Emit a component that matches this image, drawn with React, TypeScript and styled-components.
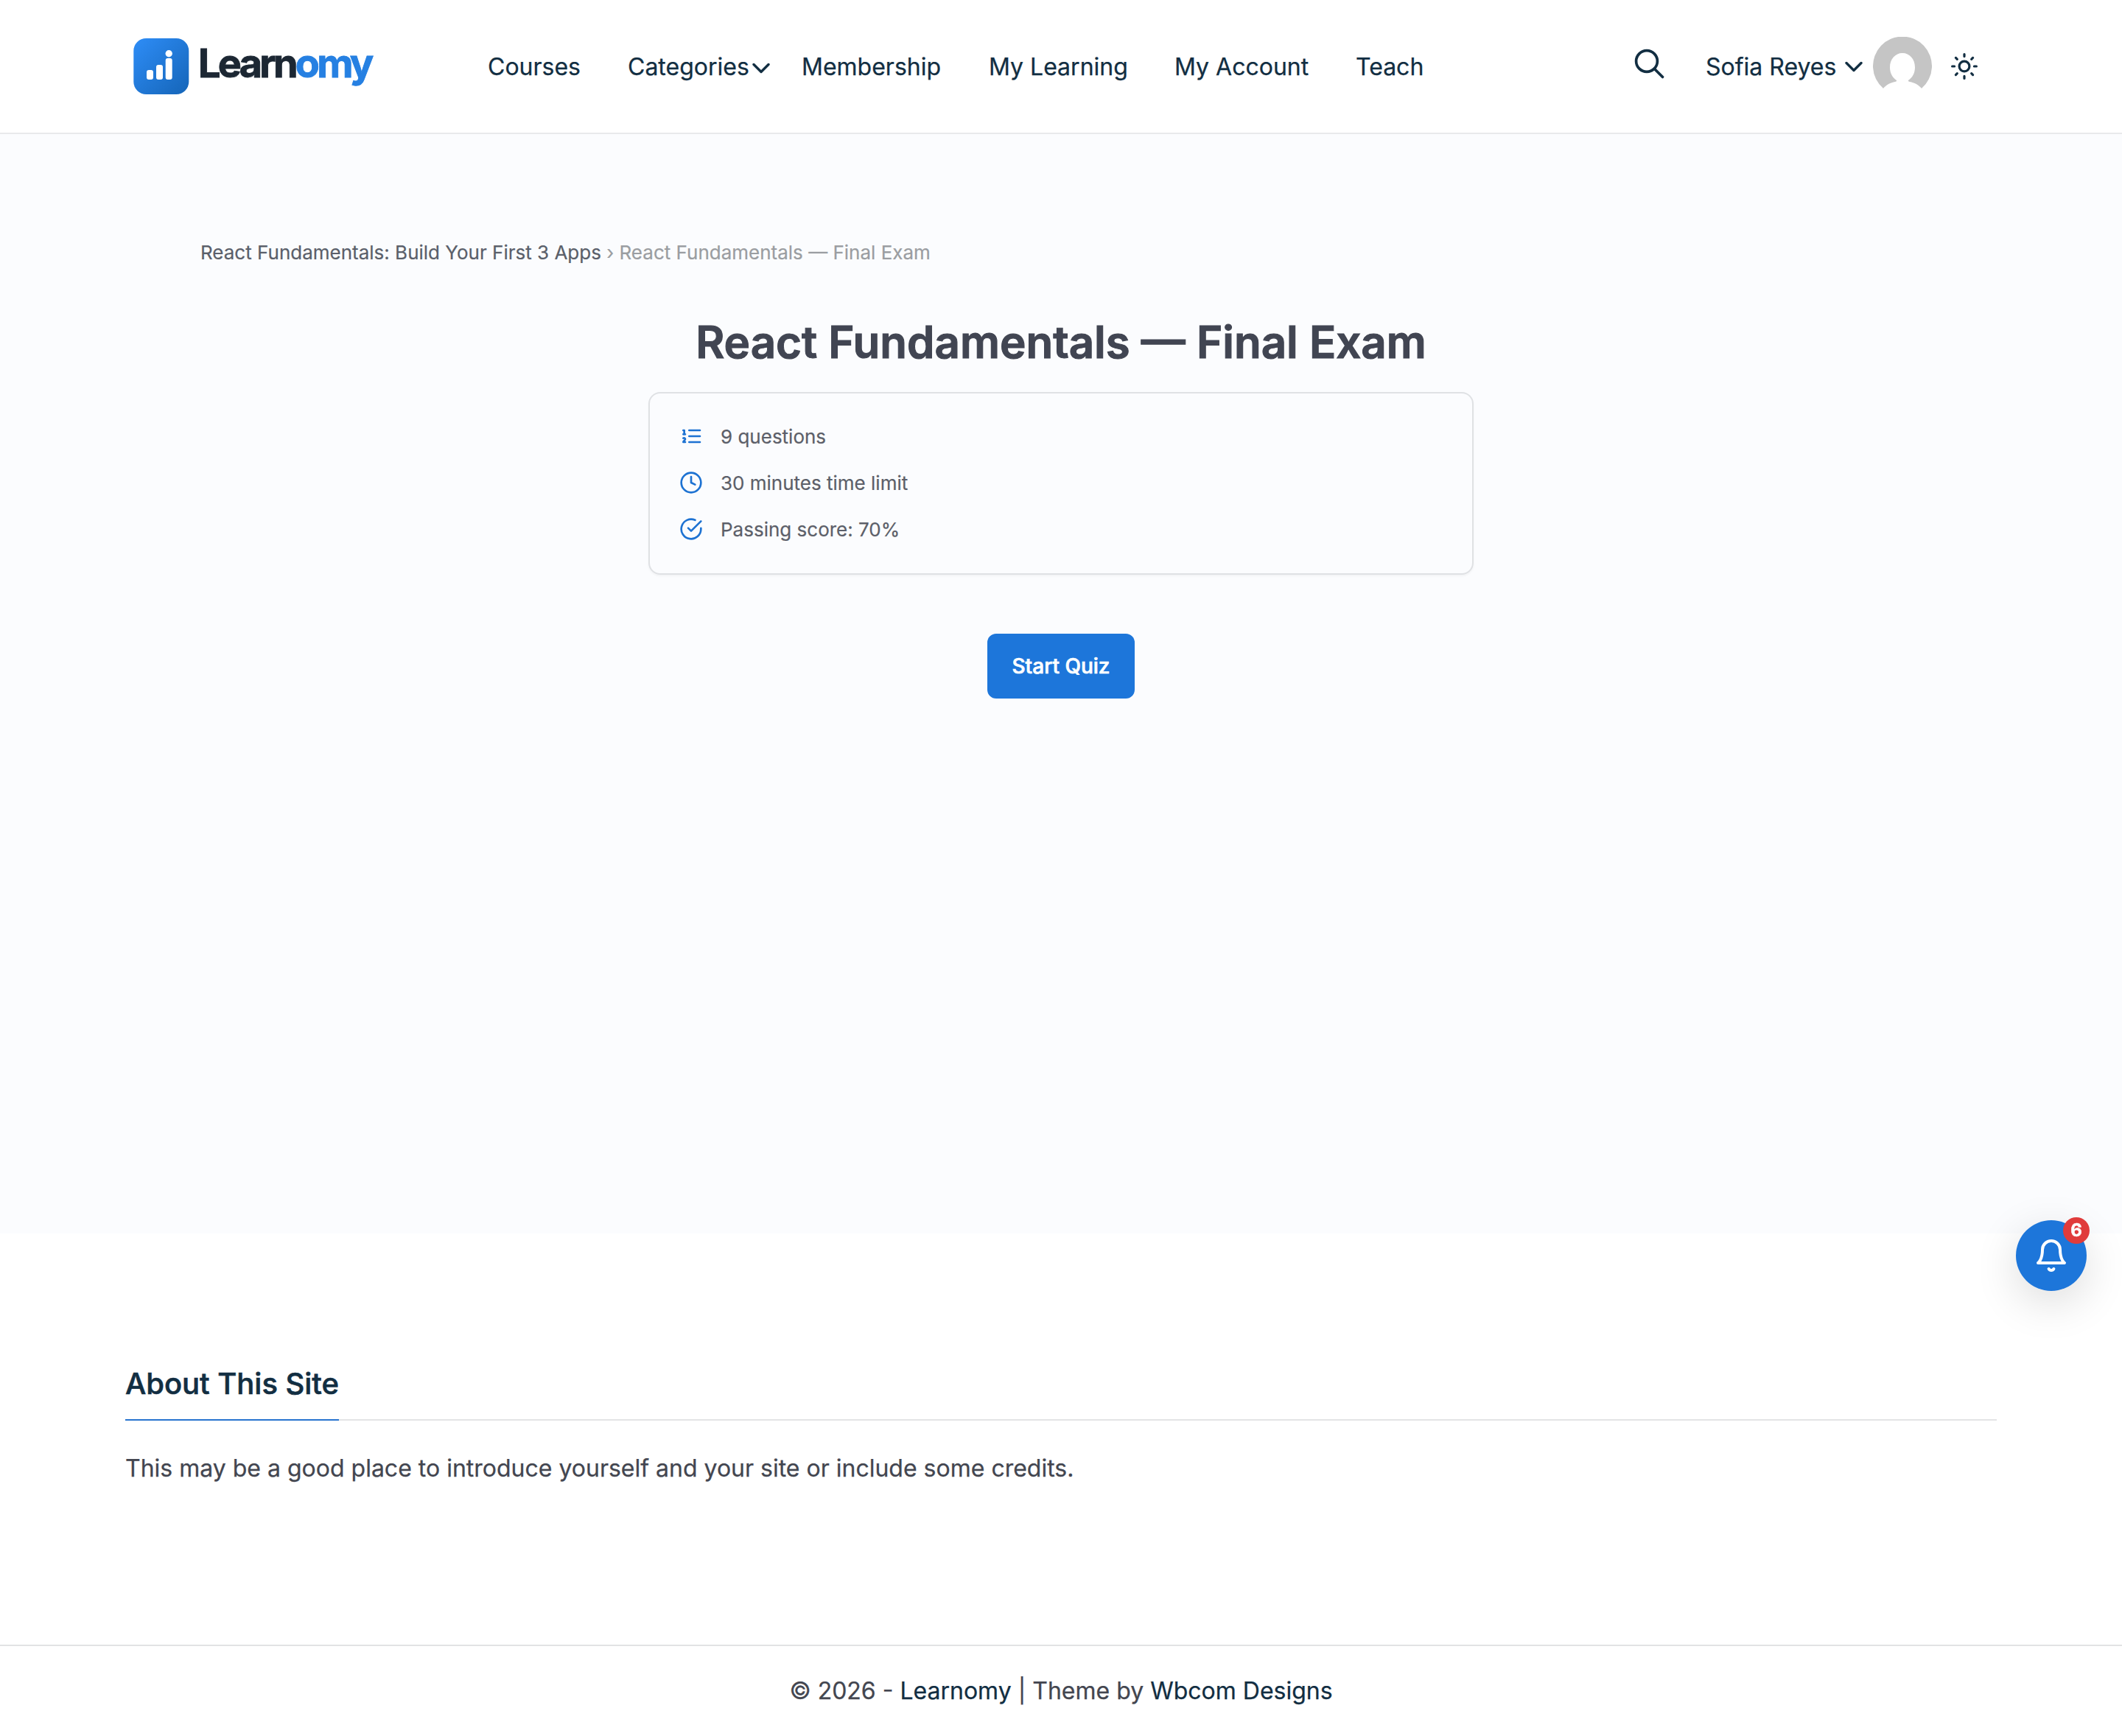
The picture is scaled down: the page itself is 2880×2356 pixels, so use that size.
import React from "react";
import styled, { createGlobalStyle } from "styled-components";

const Global = createGlobalStyle`
  *{box-sizing:border-box}
  body{margin:0;background:#fff;font-family:Inter,"Liberation Sans",sans-serif;color:#122e42;}
  h1,h2,p{margin:0}
`;

const Page = styled.div`
  height: 2356px;
  display: flex;
  flex-direction: column;
`;
const Header = styled.header`
  height: 182px;
  flex: none;
  border-bottom: 2px solid #e8e9eb;
  display: flex;
  align-items: center;
  padding: 0 196px 0 181px;
  font-size: 32px;
  line-height: 48px;
  -webkit-text-stroke: 0.25px currentColor;
`;
const Logo = styled.a`
  display: flex;
  align-items: center;
  width: 481px;
`;
const Wordmark = styled.span`
  font-size: 54px;
  font-weight: 700;
  letter-spacing: -3.75px;
  margin: -8px 0 0 12px;
  color: #1c2733;
  -webkit-text-stroke: 0.9px currentColor;
  b { color: #2680e2; font-weight: 700; -webkit-text-stroke: 0.9px #2680e2; }
`;
const Nav = styled.nav`
  display: flex;
  flex: 1;
  padding-top: 2px;
`;
const NavItem = styled.a<{ $w: number }>`
  display: flex;
  align-items: center;
  gap: 4px;
  width: ${(p) => p.$w}px;
  white-space: nowrap;
  svg { margin-top: 2px; }
`;
const Tools = styled.div`
  display: flex;
  align-items: center;
`;
const SearchIcon = styled.svg`
  margin-bottom: 6px;
`;
const User = styled.a`
  display: flex;
  align-items: center;
  margin: 0 26px 0 55px;
  white-space: nowrap;
`;
const UserName = styled.span`
  width: 176px;
  margin-right: 13px;
  padding-top: 2px;
`;
const AvatarIcon = styled.svg`
  margin-left: 14px;
`;

const Main = styled.main`
  height: 1492px;
  flex: none;
  background: #fbfcfe;
  padding: 142px 272px 0;
  display: flex;
  flex-direction: column;
`;
const Crumbs = styled.div`
  font-size: 26px;
  line-height: 38px;
  color: #5a5f6a;
  -webkit-text-stroke: 0.2px currentColor;
  span { color: #9a9da1; }
`;
const Title = styled.h1`
  margin-top: 62px;
  text-align: center;
  font-size: 60px;
  line-height: 80px;
  font-weight: 600;
  color: #414552;
  -webkit-text-stroke: 1.1px currentColor;
`;
const Card = styled.section`
  align-self: center;
  width: 1120px;
  height: 248px;
  margin-top: 28px;
  border: 2px solid #dfe1e4;
  border-radius: 16px;
  padding: 26.5px 40px;
  box-shadow: 0 2px 3px rgba(0, 0, 0, 0.04);
`;
const Fact = styled.div`
  display: flex;
  align-items: center;
  gap: 24px;
  height: 63px;
  font-size: 26px;
  color: #5c5f69;
  -webkit-text-stroke: 0.2px currentColor;
  svg { color: #1d72d2; flex: none; }
`;
const Start = styled.button`
  align-self: center;
  width: 200px;
  height: 88px;
  margin-top: 80px;
  border: 0;
  border-radius: 12px;
  background: #1d76da;
  color: #fff;
  font: 500 28px Inter, sans-serif;
  -webkit-text-stroke: 0.7px currentColor;
`;

const About = styled.section`
  height: 558px;
  flex: none;
  padding: 173px 170px 0;
`;
const AboutHead = styled.div`
  height: 81px;
  border-bottom: 2px solid #e3e4e5;
  display: flex;
`;
const AboutTitle = styled.h2`
  height: 81px;
  border-bottom: 2px solid #2874cf;
  font-size: 40px;
  font-weight: 500;
  letter-spacing: -0.05px;
  line-height: 62px;
  -webkit-text-stroke: 0.6px currentColor;
`;
const AboutText = styled.p`
  margin-top: 41px;
  font-size: 32px;
  line-height: 48px;
  color: #434650;
  -webkit-text-stroke: 0.25px currentColor;
`;
const Footer = styled.footer`
  flex: 1;
  border-top: 2px solid #e2e3e4;
  display: flex;
  justify-content: center;
  align-items: center;
  padding-bottom: 2px;
  font-size: 32px;
  color: #434650;
  -webkit-text-stroke: 0.25px currentColor;
  white-space: pre;
  a { color: #122e42; }
`;

const Bell = styled.div`
  position: fixed;
  left: 2736px;
  top: 1656px;
  width: 96px;
  height: 96px;
  border-radius: 50%;
  background: #1d76da;
  color: #fff;
  display: grid;
  place-items: center;
  box-shadow: 0 16px 60px rgba(0, 0, 0, 0.14);
`;
const Badge = styled.span`
  position: absolute;
  right: -4px;
  top: -4px;
  width: 36px;
  height: 36px;
  border-radius: 50%;
  background: #e03b3b;
  display: grid;
  place-items: center;
  font-size: 24px;
  line-height: 36px;
  font-weight: 700;
  -webkit-text-stroke: 0.5px currentColor;
`;

const Icon = ({ size, sw = 2, children }: { size: number; sw?: number; children: React.ReactNode }) => (
  <svg width={size} height={size} viewBox="0 0 24 24" fill="none" stroke="currentColor" strokeWidth={sw} strokeLinecap="round" strokeLinejoin="round">
    {children}
  </svg>
);

const Chevron = () => (
  <svg width="24" height="16" viewBox="0 0 24 16" fill="none" stroke="currentColor" strokeWidth="3.4" strokeLinecap="round" strokeLinejoin="round">
    <path d="M2 3.500l10 10 10-10" />
  </svg>
);

const LogoMark = () => (
  <svg width="76" height="76" viewBox="0 0 76 76">
    <defs>
      <linearGradient id="mark" x1="0" y1="0" x2="1" y2="1">
        <stop offset="0" stopColor="#2e8df7" />
        <stop offset="1" stopColor="#1565b8" />
      </linearGradient>
    </defs>
    <rect x="0.3" y="0" width="75" height="76" rx="17" fill="url(#mark)" />
    <g fill="#fff">
      <rect x="18" y="43" width="9" height="13" rx="3" />
      <rect x="31" y="36" width="9" height="20" rx="3" />
      <rect x="43.7" y="27" width="9" height="29" rx="3" />
      <circle cx="48.2" cy="20.8" r="4.7" />
    </g>
  </svg>
);

const Avatar = () => (
  <AvatarIcon width="80" height="80" viewBox="0 0 80 80">
    <path
      fill="#c5c5c5"
      d="M14 70A40 40 0 1 1 66 70C62 65 56 62 50 61C48.500 60.700 47.500 60 48 59C53.500 55.500 57 49 57 41.500C57 30 49.500 22 40 22S23 30 23 41.500C23 49 26.500 55.500 32 59C32.500 60 31.500 60.700 30 61C24 62 18 65 14 70Z"
    />
  </AvatarIcon>
);

const links: [string, number][] = [
  ["Courses", 190],
  ["Categories", 236],
  ["Membership", 254],
  ["My Learning", 252],
  ["My Account", 246],
  ["Teach", 100],
];

export default function App() {
  return (
    <Page>
      <Global />
      <Header>
        <Logo>
          <LogoMark />
          <Wordmark>Learn<b>omy</b></Wordmark>
        </Logo>
        <Nav>
          {links.map(([t, w]) => (
            <NavItem key={t} $w={w}>
              {t}
              {t === "Categories" && <Chevron />}
            </NavItem>
          ))}
        </Nav>
        <Tools>
          <SearchIcon width="42" height="42" viewBox="0 0 42 42" fill="none" stroke="currentColor" strokeWidth="3.7" strokeLinecap="round">
            <circle cx="17" cy="17" r="14.400" />
            <path d="M27.500 27.500l11 11" />
          </SearchIcon>
          <User>
            <UserName>Sofia Reyes</UserName>
            <Chevron />
            <Avatar />
          </User>
          <svg width="36" height="36" viewBox="0 0 36 36" fill="none" stroke="currentColor" strokeWidth="3.2" strokeLinecap="round">
            <circle cx="18" cy="18" r="6.900" />
            <path d="M18 1.600v3M18 31.400v3M1.600 18h3M31.400 18h3M6.400 6.400l1.900 1.900M27.700 27.700l1.900 1.900M6.400 29.600l1.900-1.900M27.700 8.300l1.900-1.900" />
          </svg>
        </Tools>
      </Header>
      <Main>
        <Crumbs>React Fundamentals: Build Your First 3 Apps <span>› React Fundamentals — Final Exam</span></Crumbs>
        <Title>React Fundamentals — Final Exam</Title>
        <Card>
          <Fact>
            <Icon size={32}><path d="M10 6h11M10 12h11M10 18h11M4 6h1v4M4 10h2M6 18H4c0-1 2-2 2-3s-1-1.500-2-1" /></Icon>
            9 questions
          </Fact>
          <Fact>
            <Icon size={32}><circle cx="12" cy="12" r="10" /><path d="M12 6v6l4 2" /></Icon>
            30 minutes time limit
          </Fact>
          <Fact>
            <Icon size={32}><path d="M22 11.080V12a10 10 0 1 1-5.930-9.140" /><path d="m9 11 3 3L22 4" /></Icon>
            Passing score: 70%
          </Fact>
        </Card>
        <Start>Start Quiz</Start>
      </Main>
      <About>
        <AboutHead>
          <AboutTitle>About This Site</AboutTitle>
        </AboutHead>
        <AboutText>This may be a good place to introduce yourself and your site or include some credits.</AboutText>
      </About>
      <Footer>© 2026 - <a>Learnomy</a> | Theme by <a>Wbcom Designs</a></Footer>
      <Bell>
        <Icon size={48}><path d="M6 8a6 6 0 0 1 12 0c0 7 3 9 3 9H3s3-2 3-9" /><path d="M10.300 21a1.940 1.940 0 0 0 3.400 0" /></Icon>
        <Badge>6</Badge>
      </Bell>
    </Page>
  );
}
